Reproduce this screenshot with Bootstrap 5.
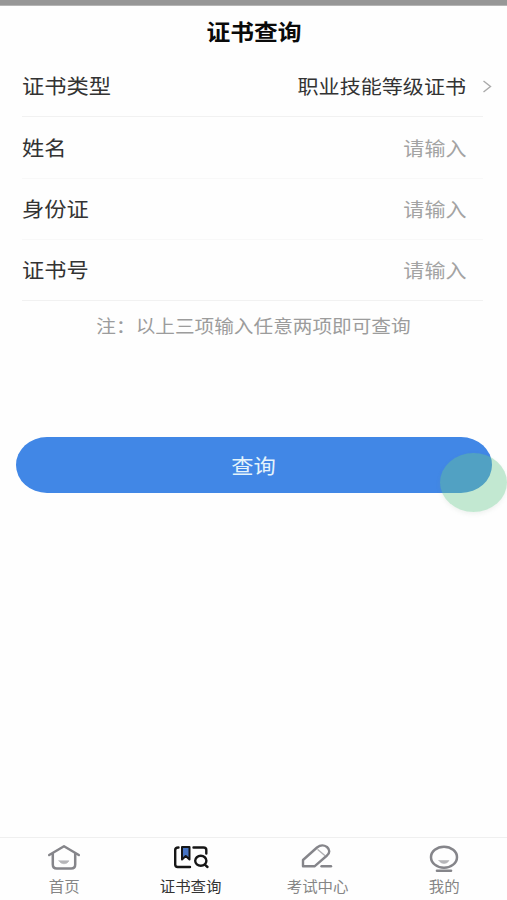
<!DOCTYPE html>
<html lang="zh-CN">
<head>
<meta charset="utf-8">
<meta name="viewport" content="width=device-width, initial-scale=1">
<title>证书查询</title>
<link href="https://cdn.jsdelivr.net/npm/bootstrap@5.3.0/dist/css/bootstrap.min.css" rel="stylesheet">
<style>
body{font-family:"Noto Sans CJK SC",sans-serif;color:#333;background:#fefefe;overflow:hidden}
.status-strip{height:6px;background:#979797;border-bottom:1px solid #b5b5b5}
.page-title{height:50px;font-size:22px;font-weight:700;color:#0a0a0a;line-height:1;padding:0 0 2px 1px}
.wide{display:inline-block;transform:scaleX(1.08);white-space:nowrap;line-height:1}
.from-start{transform-origin:left}
.from-end{transform-origin:right}
.field{height:61.3px;margin:0 24px 0 22px;font-size:20.6px;border-bottom:1px solid #f8f8f8}
.field:first-child,.field:last-child{border-bottom-color:#f1f1f1}
.field .from-start{padding-bottom:1px}
.field-value{font-size:19.5px;margin-right:16px}
.hint{color:#a3a3a3}
.chev{margin-right:-9px;width:10px;height:14px}
.note{font-size:18.2px;color:#9c9c9c;height:50px;padding:0 0 2px 1px}
.query-wrap{margin:86px 15px 0 16px}
.query-btn{height:56px;background:#4187e6;border-radius:31px/28px;color:#e4f3fb;font-size:20.6px;border:0}
.query-btn:hover{background:#4187e6;color:#e4f3fb}
.query-btn .wide{padding-bottom:2px}
.float-dot{right:-15px;top:16px;width:67px;height:59px;border-radius:50%;background:rgba(105,200,143,.4);box-shadow:0 2px 4px rgba(120,150,130,.12)}
.tabs{height:63px;border-top:1px solid #efefef;font-size:14.3px;color:#858585}
.tabs a{padding:4px 0 0 1px}
.tabs svg{width:38px;height:31px;display:block;margin-bottom:6px}
.tabs .current{color:#333}
</style>
</head>
<body class="vh-100 d-flex flex-column">
<div class="status-strip flex-shrink-0"></div>
<header class="page-title d-flex align-items-center justify-content-center flex-shrink-0"><span class="wide">证书查询</span></header>
<main class="flex-grow-1">
  <div>
    <div class="field d-flex align-items-center">
      <span class="wide from-start me-auto">证书类型</span>
      <span class="wide from-end field-value">职业技能等级证书</span>
      <svg class="chev" viewBox="0 0 10 14" fill="none" stroke="#aaa" stroke-width="1.4"><path d="M1.5 2 8.500 7.500l-7 5.500"/></svg>
    </div>
    <div class="field d-flex align-items-center"><span class="wide from-start me-auto">姓名</span><span class="wide from-end field-value hint me-3">请输入</span></div>
    <div class="field d-flex align-items-center"><span class="wide from-start me-auto">身份证</span><span class="wide from-end field-value hint me-3">请输入</span></div>
    <div class="field d-flex align-items-center"><span class="wide from-start me-auto">证书号</span><span class="wide from-end field-value hint me-3">请输入</span></div>
  </div>
  <div class="note d-flex align-items-center justify-content-center"><span class="wide">注：以上三项输入任意两项即可查询</span></div>
  <div class="query-wrap position-relative">
    <button type="button" class="btn query-btn w-100 p-0"><span class="wide">查询</span></button>
    <span class="float-dot position-absolute"></span>
  </div>
</main>
<nav class="tabs row g-0 flex-shrink-0 text-center">
  <a class="col d-flex flex-column align-items-center text-reset text-decoration-none">
    <svg viewBox="0 0 38 31" fill="none" stroke="#85858a" stroke-width="2.500" stroke-linejoin="round" stroke-linecap="round"><path d="M4.200 13 19 4.200 33.800 13M7.800 11.500V22.500q0 4 4 4h14.400q4 0 4-4V11.500"/><path d="M14 18.800h10q-1.500 3-5 3t-5-3Z" fill="#b5b5b8" stroke="#b5b5b8" stroke-width=".6"/></svg>
    <span class="wide">首页</span>
  </a>
  <a class="col d-flex flex-column align-items-center text-decoration-none current">
    <svg viewBox="0 0 38 31" fill="none" stroke="#161616" stroke-width="2.400" stroke-linejoin="round" stroke-linecap="round"><path d="M6.500 5.500Q3.200 5.500 3.200 8v14.500Q3.200 25 5.700 25H18M21.500 5.500H31.500Q34.300 5.500 34.300 8v3.500"/><path d="M10 5h7.500v12.500L13.750 14 10 17.500Z" fill="#4774c4" stroke-width="2"/><ellipse cx="28.800" cy="18.800" rx="5.600" ry="5"/><path d="m32.800 22.700 2.700 2.300"/></svg>
    <span class="wide">证书查询</span>
  </a>
  <a class="col d-flex flex-column align-items-center text-reset text-decoration-none">
    <svg viewBox="0 0 38 31" fill="none" stroke="#85858a" stroke-width="2.400" stroke-linejoin="round" stroke-linecap="round"><path d="M5 24.300v-6.300L19 5.500q5-4 10-.5 4.500 4 0 8.500L16.500 24.300Z"/><path d="m20 7.800 6.500 5.400" stroke="#b0b0b3" stroke-width="1.400"/><path d="M23.500 24.300H33"/></svg>
    <span class="wide">考试中心</span>
  </a>
  <a class="col d-flex flex-column align-items-center text-reset text-decoration-none">
    <svg viewBox="0 0 38 31" fill="none" stroke="#85858a" stroke-width="2.500" stroke-linecap="round"><ellipse cx="19" cy="15.200" rx="13" ry="10.500"/><path d="M12 28.800h14" stroke-width="2.600"/><path d="M14 18.500h10q-1.500 3-5 3t-5-3Z" fill="#b5b5b8" stroke="#b5b5b8" stroke-width=".6"/></svg>
    <span class="wide">我的</span>
  </a>
</nav>
<script src="https://cdn.jsdelivr.net/npm/bootstrap@5.3.0/dist/js/bootstrap.bundle.min.js"></script>
</body>
</html>
